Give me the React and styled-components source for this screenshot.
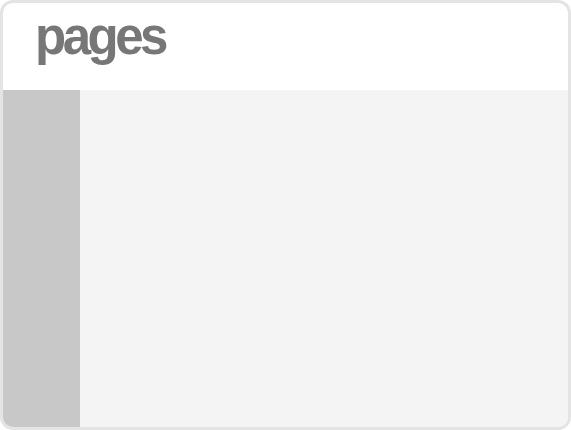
import React from "react";
import styled, { createGlobalStyle } from "styled-components";

const Global = createGlobalStyle`
  html, body { margin:0; padding:0; background:#ffffff; }
  body { font-family: "Liberation Sans", Arial, sans-serif; }
`

const Frame = styled.div`
  box-sizing:border-box;
  width:571px;
  height:430px;
  border:3px solid #e4e4e4;
  border-radius:13px;
  overflow:hidden;
  display:flex;
  flex-direction:column;
  background:#ffffff;
`

const Header = styled.div`
  height:87px;
  flex-shrink:0;
  display:flex;
  align-items:flex-start;
  padding-left:32px;
`

const Title = styled.h1`
  margin:0;
  margin-top:5px;
  font-family:"Liberation Sans", Arial, sans-serif;
  font-weight:700;
  font-size:51px;
  line-height:58px;
  letter-spacing:-3.5px;
  color:#777777;
`

const Body = styled.div`
  flex:1;
  display:flex;
`

const Sidebar = styled.div`
  width:77px;
  background:#c8c8c8;
`

const Content = styled.div`
  flex:1;
  background:#f4f4f4;
`

const App = () =>{
    return(
        <>
            <Global/>
            <Frame>
                <Header>
                    <Title>pages</Title>
                </Header>
                <Body>
                    <Sidebar/>
                    <Content/>
                </Body>
            </Frame>
        </>
    )
}

export default App;
